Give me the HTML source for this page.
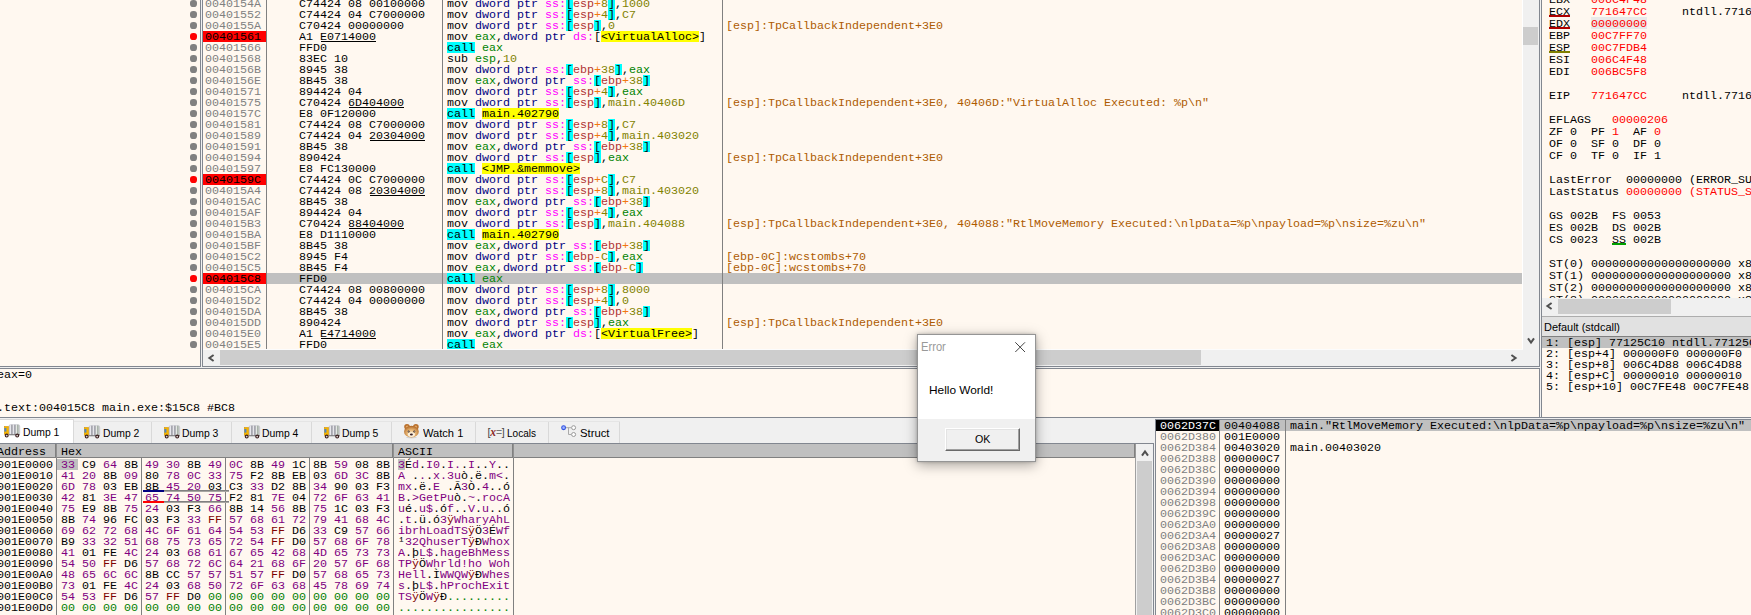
<!DOCTYPE html>
<html><head><meta charset="utf-8"><title>x64dbg</title><style>
html,body{margin:0;padding:0}
body{width:1751px;height:615px;overflow:hidden;position:relative;background:#FFF8F0;font-family:"Liberation Sans",sans-serif}
body div,body svg.a{position:absolute}
.m{font:11px/13px "Liberation Mono",monospace;height:11px;white-space:pre;transform:scaleX(1.06045);transform-origin:0 0}
.s{font-family:"Liberation Sans",sans-serif;white-space:pre;transform-origin:0 0}
.dot{width:6.2px;height:6.2px;border-radius:50%}
#dlg{box-sizing:border-box;border:1px solid #959595;box-shadow:0 3px 12px rgba(0,0,0,.35),0 0 3px rgba(0,0,0,.2)}
#ok{box-sizing:border-box;background:#F0F0F0;border:1px solid;border-color:#fff #696969 #696969 #fff;box-shadow:inset -1px -1px 0 #A0A0A0,inset 1px 1px 0 #E3E3E3}
</style></head>
<body>
<div id="dis" style="left:0;top:0">
<div style="left:267px;top:273px;width:1256px;height:11px;background:#C0C0C0;"></div>
<div class="dot" style="left:190.4px;top:0.4px;background:#808080"></div>
<div class="m" style="left:205px;top:-2px;color:#808080;">0040154A</div>
<div class="m" style="left:298.5px;top:-2px;color:#000;">C74424 08 00100000</div>
<div style="left:566px;top:-2px;width:7px;height:11px;background:#00FFFF;"></div>
<div style="left:608px;top:-2px;width:7px;height:11px;background:#00FFFF;"></div>
<div class="m" style="left:447px;top:-2px;color:#000;"><span style="color:#000;">mov</span> <span style="color:#000080;">dword ptr</span> <span style="color:#FF00FF;">ss:</span><span style="color:#000;">[</span><span style="color:#B03434;">esp</span><span style="color:#F27711;">+</span><span style="color:#828200;">8</span><span style="color:#000;">]</span><span style="color:#000;">,</span><span style="color:#828200;">1000</span></div>
<div class="dot" style="left:190.4px;top:11.4px;background:#808080"></div>
<div class="m" style="left:205px;top:9px;color:#808080;">00401552</div>
<div class="m" style="left:298.5px;top:9px;color:#000;">C74424 04 C7000000</div>
<div style="left:566px;top:9px;width:7px;height:11px;background:#00FFFF;"></div>
<div style="left:608px;top:9px;width:7px;height:11px;background:#00FFFF;"></div>
<div class="m" style="left:447px;top:9px;color:#000;"><span style="color:#000;">mov</span> <span style="color:#000080;">dword ptr</span> <span style="color:#FF00FF;">ss:</span><span style="color:#000;">[</span><span style="color:#B03434;">esp</span><span style="color:#F27711;">+</span><span style="color:#828200;">4</span><span style="color:#000;">]</span><span style="color:#000;">,</span><span style="color:#828200;">C7</span></div>
<div class="dot" style="left:190.4px;top:22.4px;background:#808080"></div>
<div class="m" style="left:205px;top:20px;color:#808080;">0040155A</div>
<div class="m" style="left:298.5px;top:20px;color:#000;">C70424 00000000</div>
<div style="left:566px;top:20px;width:7px;height:11px;background:#00FFFF;"></div>
<div style="left:594px;top:20px;width:7px;height:11px;background:#00FFFF;"></div>
<div class="m" style="left:447px;top:20px;color:#000;"><span style="color:#000;">mov</span> <span style="color:#000080;">dword ptr</span> <span style="color:#FF00FF;">ss:</span><span style="color:#000;">[</span><span style="color:#B03434;">esp</span><span style="color:#000;">]</span><span style="color:#000;">,</span><span style="color:#828200;">0</span></div>
<div class="m" style="left:726.4px;top:20px;color:#AE5B00;">[esp]:TpCallbackIndependent+3E0</div>
<div class="dot" style="left:190.4px;top:33.4px;background:#FF0000"></div>
<div style="left:203px;top:31px;width:63px;height:11px;background:#FF0000;"></div>
<div class="m" style="left:205px;top:31px;color:#000;">00401561</div>
<div style="left:321px;top:41px;width:55px;height:1px;background:#000;"></div>
<div class="m" style="left:298.5px;top:31px;color:#000;">A1 E0714000</div>
<div style="left:601px;top:31px;width:98px;height:11px;background:#FFFF00;"></div>
<div class="m" style="left:447px;top:31px;color:#000;"><span style="color:#000;">mov</span> <span style="color:#008300;">eax</span><span style="color:#000;">,</span><span style="color:#000080;">dword ptr</span> <span style="color:#FF00FF;">ds:</span><span style="color:#000;">[</span><span style="color:#000;">&lt;VirtualAlloc&gt;</span><span style="color:#000;">]</span></div>
<div class="dot" style="left:190.4px;top:44.4px;background:#808080"></div>
<div class="m" style="left:205px;top:42px;color:#808080;">00401566</div>
<div class="m" style="left:298.5px;top:42px;color:#000;">FFD0</div>
<div style="left:447px;top:42px;width:28px;height:11px;background:#00FFFF;"></div>
<div class="m" style="left:447px;top:42px;color:#000;"><span style="color:#000;">call</span> <span style="color:#008300;">eax</span></div>
<div class="dot" style="left:190.4px;top:55.4px;background:#808080"></div>
<div class="m" style="left:205px;top:53px;color:#808080;">00401568</div>
<div class="m" style="left:298.5px;top:53px;color:#000;">83EC 10</div>
<div class="m" style="left:447px;top:53px;color:#000;"><span style="color:#000;">sub</span> <span style="color:#008300;">esp</span><span style="color:#000;">,</span><span style="color:#828200;">10</span></div>
<div class="dot" style="left:190.4px;top:66.4px;background:#808080"></div>
<div class="m" style="left:205px;top:64px;color:#808080;">0040156B</div>
<div class="m" style="left:298.5px;top:64px;color:#000;">8945 38</div>
<div style="left:566px;top:64px;width:7px;height:11px;background:#00FFFF;"></div>
<div style="left:615px;top:64px;width:7px;height:11px;background:#00FFFF;"></div>
<div class="m" style="left:447px;top:64px;color:#000;"><span style="color:#000;">mov</span> <span style="color:#000080;">dword ptr</span> <span style="color:#FF00FF;">ss:</span><span style="color:#000;">[</span><span style="color:#B03434;">ebp</span><span style="color:#F27711;">+</span><span style="color:#828200;">38</span><span style="color:#000;">]</span><span style="color:#000;">,</span><span style="color:#008300;">eax</span></div>
<div class="dot" style="left:190.4px;top:77.4px;background:#808080"></div>
<div class="m" style="left:205px;top:75px;color:#808080;">0040156E</div>
<div class="m" style="left:298.5px;top:75px;color:#000;">8B45 38</div>
<div style="left:594px;top:75px;width:7px;height:11px;background:#00FFFF;"></div>
<div style="left:643px;top:75px;width:7px;height:11px;background:#00FFFF;"></div>
<div class="m" style="left:447px;top:75px;color:#000;"><span style="color:#000;">mov</span> <span style="color:#008300;">eax</span><span style="color:#000;">,</span><span style="color:#000080;">dword ptr</span> <span style="color:#FF00FF;">ss:</span><span style="color:#000;">[</span><span style="color:#B03434;">ebp</span><span style="color:#F27711;">+</span><span style="color:#828200;">38</span><span style="color:#000;">]</span></div>
<div class="dot" style="left:190.4px;top:88.4px;background:#808080"></div>
<div class="m" style="left:205px;top:86px;color:#808080;">00401571</div>
<div class="m" style="left:298.5px;top:86px;color:#000;">894424 04</div>
<div style="left:566px;top:86px;width:7px;height:11px;background:#00FFFF;"></div>
<div style="left:608px;top:86px;width:7px;height:11px;background:#00FFFF;"></div>
<div class="m" style="left:447px;top:86px;color:#000;"><span style="color:#000;">mov</span> <span style="color:#000080;">dword ptr</span> <span style="color:#FF00FF;">ss:</span><span style="color:#000;">[</span><span style="color:#B03434;">esp</span><span style="color:#F27711;">+</span><span style="color:#828200;">4</span><span style="color:#000;">]</span><span style="color:#000;">,</span><span style="color:#008300;">eax</span></div>
<div class="dot" style="left:190.4px;top:99.4px;background:#808080"></div>
<div class="m" style="left:205px;top:97px;color:#808080;">00401575</div>
<div style="left:349px;top:107px;width:55px;height:1px;background:#000;"></div>
<div class="m" style="left:298.5px;top:97px;color:#000;">C70424 6D404000</div>
<div style="left:566px;top:97px;width:7px;height:11px;background:#00FFFF;"></div>
<div style="left:594px;top:97px;width:7px;height:11px;background:#00FFFF;"></div>
<div class="m" style="left:447px;top:97px;color:#000;"><span style="color:#000;">mov</span> <span style="color:#000080;">dword ptr</span> <span style="color:#FF00FF;">ss:</span><span style="color:#000;">[</span><span style="color:#B03434;">esp</span><span style="color:#000;">]</span><span style="color:#000;">,</span><span style="color:#828200;">main.40406D</span></div>
<div class="m" style="left:726.4px;top:97px;color:#AE5B00;">[esp]:TpCallbackIndependent+3E0, 40406D:"VirtualAlloc Executed: %p\n"</div>
<div class="dot" style="left:190.4px;top:110.4px;background:#808080"></div>
<div class="m" style="left:205px;top:108px;color:#808080;">0040157C</div>
<div class="m" style="left:298.5px;top:108px;color:#000;">E8 0F120000</div>
<div style="left:447px;top:108px;width:28px;height:11px;background:#00FFFF;"></div>
<div style="left:482px;top:108px;width:77px;height:11px;background:#FFFF00;"></div>
<div class="m" style="left:447px;top:108px;color:#000;"><span style="color:#000;">call</span> <span style="color:#000;">main.402790</span></div>
<div class="dot" style="left:190.4px;top:121.4px;background:#808080"></div>
<div class="m" style="left:205px;top:119px;color:#808080;">00401581</div>
<div class="m" style="left:298.5px;top:119px;color:#000;">C74424 08 C7000000</div>
<div style="left:566px;top:119px;width:7px;height:11px;background:#00FFFF;"></div>
<div style="left:608px;top:119px;width:7px;height:11px;background:#00FFFF;"></div>
<div class="m" style="left:447px;top:119px;color:#000;"><span style="color:#000;">mov</span> <span style="color:#000080;">dword ptr</span> <span style="color:#FF00FF;">ss:</span><span style="color:#000;">[</span><span style="color:#B03434;">esp</span><span style="color:#F27711;">+</span><span style="color:#828200;">8</span><span style="color:#000;">]</span><span style="color:#000;">,</span><span style="color:#828200;">C7</span></div>
<div class="dot" style="left:190.4px;top:132.4px;background:#808080"></div>
<div class="m" style="left:205px;top:130px;color:#808080;">00401589</div>
<div style="left:370px;top:140px;width:55px;height:1px;background:#000;"></div>
<div class="m" style="left:298.5px;top:130px;color:#000;">C74424 04 20304000</div>
<div style="left:566px;top:130px;width:7px;height:11px;background:#00FFFF;"></div>
<div style="left:608px;top:130px;width:7px;height:11px;background:#00FFFF;"></div>
<div class="m" style="left:447px;top:130px;color:#000;"><span style="color:#000;">mov</span> <span style="color:#000080;">dword ptr</span> <span style="color:#FF00FF;">ss:</span><span style="color:#000;">[</span><span style="color:#B03434;">esp</span><span style="color:#F27711;">+</span><span style="color:#828200;">4</span><span style="color:#000;">]</span><span style="color:#000;">,</span><span style="color:#828200;">main.403020</span></div>
<div class="dot" style="left:190.4px;top:143.4px;background:#808080"></div>
<div class="m" style="left:205px;top:141px;color:#808080;">00401591</div>
<div class="m" style="left:298.5px;top:141px;color:#000;">8B45 38</div>
<div style="left:594px;top:141px;width:7px;height:11px;background:#00FFFF;"></div>
<div style="left:643px;top:141px;width:7px;height:11px;background:#00FFFF;"></div>
<div class="m" style="left:447px;top:141px;color:#000;"><span style="color:#000;">mov</span> <span style="color:#008300;">eax</span><span style="color:#000;">,</span><span style="color:#000080;">dword ptr</span> <span style="color:#FF00FF;">ss:</span><span style="color:#000;">[</span><span style="color:#B03434;">ebp</span><span style="color:#F27711;">+</span><span style="color:#828200;">38</span><span style="color:#000;">]</span></div>
<div class="dot" style="left:190.4px;top:154.4px;background:#808080"></div>
<div class="m" style="left:205px;top:152px;color:#808080;">00401594</div>
<div class="m" style="left:298.5px;top:152px;color:#000;">890424</div>
<div style="left:566px;top:152px;width:7px;height:11px;background:#00FFFF;"></div>
<div style="left:594px;top:152px;width:7px;height:11px;background:#00FFFF;"></div>
<div class="m" style="left:447px;top:152px;color:#000;"><span style="color:#000;">mov</span> <span style="color:#000080;">dword ptr</span> <span style="color:#FF00FF;">ss:</span><span style="color:#000;">[</span><span style="color:#B03434;">esp</span><span style="color:#000;">]</span><span style="color:#000;">,</span><span style="color:#008300;">eax</span></div>
<div class="m" style="left:726.4px;top:152px;color:#AE5B00;">[esp]:TpCallbackIndependent+3E0</div>
<div class="dot" style="left:190.4px;top:165.4px;background:#808080"></div>
<div class="m" style="left:205px;top:163px;color:#808080;">00401597</div>
<div class="m" style="left:298.5px;top:163px;color:#000;">E8 FC130000</div>
<div style="left:447px;top:163px;width:28px;height:11px;background:#00FFFF;"></div>
<div style="left:482px;top:163px;width:98px;height:11px;background:#FFFF00;"></div>
<div class="m" style="left:447px;top:163px;color:#000;"><span style="color:#000;">call</span> <span style="color:#000;">&lt;JMP.&amp;memmove&gt;</span></div>
<div class="dot" style="left:190.4px;top:176.4px;background:#FF0000"></div>
<div style="left:203px;top:174px;width:63px;height:11px;background:#FF0000;"></div>
<div class="m" style="left:205px;top:174px;color:#000;">0040159C</div>
<div class="m" style="left:298.5px;top:174px;color:#000;">C74424 0C C7000000</div>
<div style="left:566px;top:174px;width:7px;height:11px;background:#00FFFF;"></div>
<div style="left:608px;top:174px;width:7px;height:11px;background:#00FFFF;"></div>
<div class="m" style="left:447px;top:174px;color:#000;"><span style="color:#000;">mov</span> <span style="color:#000080;">dword ptr</span> <span style="color:#FF00FF;">ss:</span><span style="color:#000;">[</span><span style="color:#B03434;">esp</span><span style="color:#F27711;">+</span><span style="color:#828200;">C</span><span style="color:#000;">]</span><span style="color:#000;">,</span><span style="color:#828200;">C7</span></div>
<div class="dot" style="left:190.4px;top:187.4px;background:#808080"></div>
<div class="m" style="left:205px;top:185px;color:#808080;">004015A4</div>
<div style="left:370px;top:195px;width:55px;height:1px;background:#000;"></div>
<div class="m" style="left:298.5px;top:185px;color:#000;">C74424 08 20304000</div>
<div style="left:566px;top:185px;width:7px;height:11px;background:#00FFFF;"></div>
<div style="left:608px;top:185px;width:7px;height:11px;background:#00FFFF;"></div>
<div class="m" style="left:447px;top:185px;color:#000;"><span style="color:#000;">mov</span> <span style="color:#000080;">dword ptr</span> <span style="color:#FF00FF;">ss:</span><span style="color:#000;">[</span><span style="color:#B03434;">esp</span><span style="color:#F27711;">+</span><span style="color:#828200;">8</span><span style="color:#000;">]</span><span style="color:#000;">,</span><span style="color:#828200;">main.403020</span></div>
<div class="dot" style="left:190.4px;top:198.4px;background:#808080"></div>
<div class="m" style="left:205px;top:196px;color:#808080;">004015AC</div>
<div class="m" style="left:298.5px;top:196px;color:#000;">8B45 38</div>
<div style="left:594px;top:196px;width:7px;height:11px;background:#00FFFF;"></div>
<div style="left:643px;top:196px;width:7px;height:11px;background:#00FFFF;"></div>
<div class="m" style="left:447px;top:196px;color:#000;"><span style="color:#000;">mov</span> <span style="color:#008300;">eax</span><span style="color:#000;">,</span><span style="color:#000080;">dword ptr</span> <span style="color:#FF00FF;">ss:</span><span style="color:#000;">[</span><span style="color:#B03434;">ebp</span><span style="color:#F27711;">+</span><span style="color:#828200;">38</span><span style="color:#000;">]</span></div>
<div class="dot" style="left:190.4px;top:209.4px;background:#808080"></div>
<div class="m" style="left:205px;top:207px;color:#808080;">004015AF</div>
<div class="m" style="left:298.5px;top:207px;color:#000;">894424 04</div>
<div style="left:566px;top:207px;width:7px;height:11px;background:#00FFFF;"></div>
<div style="left:608px;top:207px;width:7px;height:11px;background:#00FFFF;"></div>
<div class="m" style="left:447px;top:207px;color:#000;"><span style="color:#000;">mov</span> <span style="color:#000080;">dword ptr</span> <span style="color:#FF00FF;">ss:</span><span style="color:#000;">[</span><span style="color:#B03434;">esp</span><span style="color:#F27711;">+</span><span style="color:#828200;">4</span><span style="color:#000;">]</span><span style="color:#000;">,</span><span style="color:#008300;">eax</span></div>
<div class="dot" style="left:190.4px;top:220.4px;background:#808080"></div>
<div class="m" style="left:205px;top:218px;color:#808080;">004015B3</div>
<div style="left:349px;top:228px;width:55px;height:1px;background:#000;"></div>
<div class="m" style="left:298.5px;top:218px;color:#000;">C70424 88404000</div>
<div style="left:566px;top:218px;width:7px;height:11px;background:#00FFFF;"></div>
<div style="left:594px;top:218px;width:7px;height:11px;background:#00FFFF;"></div>
<div class="m" style="left:447px;top:218px;color:#000;"><span style="color:#000;">mov</span> <span style="color:#000080;">dword ptr</span> <span style="color:#FF00FF;">ss:</span><span style="color:#000;">[</span><span style="color:#B03434;">esp</span><span style="color:#000;">]</span><span style="color:#000;">,</span><span style="color:#828200;">main.404088</span></div>
<div class="m" style="left:726.4px;top:218px;color:#AE5B00;">[esp]:TpCallbackIndependent+3E0, 404088:"RtlMoveMemory Executed:\nlpData=%p\npayload=%p\nsize=%zu\n"</div>
<div class="dot" style="left:190.4px;top:231.4px;background:#808080"></div>
<div class="m" style="left:205px;top:229px;color:#808080;">004015BA</div>
<div class="m" style="left:298.5px;top:229px;color:#000;">E8 D1110000</div>
<div style="left:447px;top:229px;width:28px;height:11px;background:#00FFFF;"></div>
<div style="left:482px;top:229px;width:77px;height:11px;background:#FFFF00;"></div>
<div class="m" style="left:447px;top:229px;color:#000;"><span style="color:#000;">call</span> <span style="color:#000;">main.402790</span></div>
<div class="dot" style="left:190.4px;top:242.4px;background:#808080"></div>
<div class="m" style="left:205px;top:240px;color:#808080;">004015BF</div>
<div class="m" style="left:298.5px;top:240px;color:#000;">8B45 38</div>
<div style="left:594px;top:240px;width:7px;height:11px;background:#00FFFF;"></div>
<div style="left:643px;top:240px;width:7px;height:11px;background:#00FFFF;"></div>
<div class="m" style="left:447px;top:240px;color:#000;"><span style="color:#000;">mov</span> <span style="color:#008300;">eax</span><span style="color:#000;">,</span><span style="color:#000080;">dword ptr</span> <span style="color:#FF00FF;">ss:</span><span style="color:#000;">[</span><span style="color:#B03434;">ebp</span><span style="color:#F27711;">+</span><span style="color:#828200;">38</span><span style="color:#000;">]</span></div>
<div class="dot" style="left:190.4px;top:253.4px;background:#808080"></div>
<div class="m" style="left:205px;top:251px;color:#808080;">004015C2</div>
<div class="m" style="left:298.5px;top:251px;color:#000;">8945 F4</div>
<div style="left:566px;top:251px;width:7px;height:11px;background:#00FFFF;"></div>
<div style="left:608px;top:251px;width:7px;height:11px;background:#00FFFF;"></div>
<div class="m" style="left:447px;top:251px;color:#000;"><span style="color:#000;">mov</span> <span style="color:#000080;">dword ptr</span> <span style="color:#FF00FF;">ss:</span><span style="color:#000;">[</span><span style="color:#B03434;">ebp</span><span style="color:#F27711;">-</span><span style="color:#828200;">C</span><span style="color:#000;">]</span><span style="color:#000;">,</span><span style="color:#008300;">eax</span></div>
<div class="m" style="left:726.4px;top:251px;color:#AE5B00;">[ebp-0C]:wcstombs+70</div>
<div class="dot" style="left:190.4px;top:264.4px;background:#808080"></div>
<div class="m" style="left:205px;top:262px;color:#808080;">004015C5</div>
<div class="m" style="left:298.5px;top:262px;color:#000;">8B45 F4</div>
<div style="left:594px;top:262px;width:7px;height:11px;background:#00FFFF;"></div>
<div style="left:636px;top:262px;width:7px;height:11px;background:#00FFFF;"></div>
<div class="m" style="left:447px;top:262px;color:#000;"><span style="color:#000;">mov</span> <span style="color:#008300;">eax</span><span style="color:#000;">,</span><span style="color:#000080;">dword ptr</span> <span style="color:#FF00FF;">ss:</span><span style="color:#000;">[</span><span style="color:#B03434;">ebp</span><span style="color:#F27711;">-</span><span style="color:#828200;">C</span><span style="color:#000;">]</span></div>
<div class="m" style="left:726.4px;top:262px;color:#AE5B00;">[ebp-0C]:wcstombs+70</div>
<div class="dot" style="left:190.4px;top:275.4px;background:#FF0000"></div>
<div style="left:203px;top:273px;width:63px;height:11px;background:#FF0000;"></div>
<div class="m" style="left:205px;top:273px;color:#000;">004015C8</div>
<div class="m" style="left:298.5px;top:273px;color:#000;">FFD0</div>
<div style="left:447px;top:273px;width:28px;height:11px;background:#00FFFF;"></div>
<div class="m" style="left:447px;top:273px;color:#000;"><span style="color:#000;">call</span> <span style="color:#008300;">eax</span></div>
<div class="dot" style="left:190.4px;top:286.4px;background:#808080"></div>
<div class="m" style="left:205px;top:284px;color:#808080;">004015CA</div>
<div class="m" style="left:298.5px;top:284px;color:#000;">C74424 08 00800000</div>
<div style="left:566px;top:284px;width:7px;height:11px;background:#00FFFF;"></div>
<div style="left:608px;top:284px;width:7px;height:11px;background:#00FFFF;"></div>
<div class="m" style="left:447px;top:284px;color:#000;"><span style="color:#000;">mov</span> <span style="color:#000080;">dword ptr</span> <span style="color:#FF00FF;">ss:</span><span style="color:#000;">[</span><span style="color:#B03434;">esp</span><span style="color:#F27711;">+</span><span style="color:#828200;">8</span><span style="color:#000;">]</span><span style="color:#000;">,</span><span style="color:#828200;">8000</span></div>
<div class="dot" style="left:190.4px;top:297.4px;background:#808080"></div>
<div class="m" style="left:205px;top:295px;color:#808080;">004015D2</div>
<div class="m" style="left:298.5px;top:295px;color:#000;">C74424 04 00000000</div>
<div style="left:566px;top:295px;width:7px;height:11px;background:#00FFFF;"></div>
<div style="left:608px;top:295px;width:7px;height:11px;background:#00FFFF;"></div>
<div class="m" style="left:447px;top:295px;color:#000;"><span style="color:#000;">mov</span> <span style="color:#000080;">dword ptr</span> <span style="color:#FF00FF;">ss:</span><span style="color:#000;">[</span><span style="color:#B03434;">esp</span><span style="color:#F27711;">+</span><span style="color:#828200;">4</span><span style="color:#000;">]</span><span style="color:#000;">,</span><span style="color:#828200;">0</span></div>
<div class="dot" style="left:190.4px;top:308.4px;background:#808080"></div>
<div class="m" style="left:205px;top:306px;color:#808080;">004015DA</div>
<div class="m" style="left:298.5px;top:306px;color:#000;">8B45 38</div>
<div style="left:594px;top:306px;width:7px;height:11px;background:#00FFFF;"></div>
<div style="left:643px;top:306px;width:7px;height:11px;background:#00FFFF;"></div>
<div class="m" style="left:447px;top:306px;color:#000;"><span style="color:#000;">mov</span> <span style="color:#008300;">eax</span><span style="color:#000;">,</span><span style="color:#000080;">dword ptr</span> <span style="color:#FF00FF;">ss:</span><span style="color:#000;">[</span><span style="color:#B03434;">ebp</span><span style="color:#F27711;">+</span><span style="color:#828200;">38</span><span style="color:#000;">]</span></div>
<div class="dot" style="left:190.4px;top:319.4px;background:#808080"></div>
<div class="m" style="left:205px;top:317px;color:#808080;">004015DD</div>
<div class="m" style="left:298.5px;top:317px;color:#000;">890424</div>
<div style="left:566px;top:317px;width:7px;height:11px;background:#00FFFF;"></div>
<div style="left:594px;top:317px;width:7px;height:11px;background:#00FFFF;"></div>
<div class="m" style="left:447px;top:317px;color:#000;"><span style="color:#000;">mov</span> <span style="color:#000080;">dword ptr</span> <span style="color:#FF00FF;">ss:</span><span style="color:#000;">[</span><span style="color:#B03434;">esp</span><span style="color:#000;">]</span><span style="color:#000;">,</span><span style="color:#008300;">eax</span></div>
<div class="m" style="left:726.4px;top:317px;color:#AE5B00;">[esp]:TpCallbackIndependent+3E0</div>
<div class="dot" style="left:190.4px;top:330.4px;background:#808080"></div>
<div class="m" style="left:205px;top:328px;color:#808080;">004015E0</div>
<div style="left:321px;top:338px;width:55px;height:1px;background:#000;"></div>
<div class="m" style="left:298.5px;top:328px;color:#000;">A1 E4714000</div>
<div style="left:601px;top:328px;width:91px;height:11px;background:#FFFF00;"></div>
<div class="m" style="left:447px;top:328px;color:#000;"><span style="color:#000;">mov</span> <span style="color:#008300;">eax</span><span style="color:#000;">,</span><span style="color:#000080;">dword ptr</span> <span style="color:#FF00FF;">ds:</span><span style="color:#000;">[</span><span style="color:#000;">&lt;VirtualFree&gt;</span><span style="color:#000;">]</span></div>
<div class="dot" style="left:190.4px;top:341.4px;background:#808080"></div>
<div class="m" style="left:205px;top:339px;color:#808080;">004015E5</div>
<div class="m" style="left:298.5px;top:339px;color:#000;">FFD0</div>
<div style="left:447px;top:339px;width:28px;height:11px;background:#00FFFF;"></div>
<div class="m" style="left:447px;top:339px;color:#000;"><span style="color:#000;">call</span> <span style="color:#008300;">eax</span></div>
</div>
<div style="left:266px;top:0px;width:1px;height:349px;background:#808080;"></div>
<div style="left:442px;top:0px;width:1px;height:349px;background:#808080;"></div>
<div style="left:722px;top:0px;width:1px;height:349px;background:#808080;"></div>
<div style="left:200px;top:0px;width:1px;height:367px;background:#828790;"></div>
<div style="left:202px;top:0px;width:1px;height:367px;background:#828790;"></div>
<div style="left:201px;top:0px;width:1px;height:369px;background:#F0F0F0;"></div>
<div style="left:203px;top:349px;width:1336px;height:17px;background:#F0F0F0;"></div>
<div style="left:203px;top:349px;width:1320px;height:1px;background:#FCFCFC;"></div>
<div style="left:220px;top:350px;width:981px;height:15px;background:#CDCDCD;"></div>
<svg class="a" style="left:205.3px;top:351.5px" width="12" height="12" viewBox="-6 -6 12 12"><path d="M2.6 -3.0 L-1.6 0 L2.6 3.0" fill="none" stroke="#505050" stroke-width="2"/></svg>
<svg class="a" style="left:1508.0px;top:351.5px" width="12" height="12" viewBox="-6 -6 12 12"><path d="M-2.6 -3.0 L1.6 0 L-2.6 3.0" fill="none" stroke="#505050" stroke-width="2"/></svg>
<div style="left:1522px;top:0px;width:1px;height:349px;background:#FFFFFF;"></div>
<div style="left:1523px;top:0px;width:16px;height:349px;background:#F0F0F0;"></div>
<div style="left:1523px;top:27px;width:15px;height:18px;background:#CDCDCD;"></div>
<svg class="a" style="left:1524.5px;top:335px" width="12" height="12" viewBox="-6 -6 12 12"><path d="M-3.0 -2.6 L0 1.6 L3.0 -2.6" fill="none" stroke="#505050" stroke-width="2"/></svg>
<div style="left:1539px;top:0px;width:1px;height:367px;background:#828790;"></div>
<div style="left:1540px;top:0px;width:1px;height:418px;background:#F0F0F0;"></div>
<div style="left:1541px;top:0px;width:1px;height:418px;background:#828790;"></div>
<div style="left:1539px;top:368px;width:1px;height:50px;background:#828790;"></div>
<div style="left:0px;top:366px;width:200px;height:1px;background:#828790;"></div>
<div style="left:202px;top:366px;width:1338px;height:1px;background:#828790;"></div>
<div style="left:0px;top:367px;width:1540px;height:1px;background:#F0F0F0;"></div>
<div style="left:0px;top:368px;width:1540px;height:1px;background:#828790;"></div>
<div style="left:0px;top:417px;width:1751px;height:1px;background:#828790;"></div>
<div class="m" style="left:-3px;top:369px;color:#000;">eax=0</div>
<div class="m" style="left:-3px;top:402px;color:#000;">.text:004015C8 main.exe:$15C8 #BC8</div>
<div id="regs" style="left:0;top:0">
<div class="m" style="left:1549px;top:-6px;color:#000;">EBX   <span style="color:#FF0000;">006C4F48</span></div>
<div style="left:1549px;top:15px;width:21px;height:2px;background:#B00000;"></div>
<div class="m" style="left:1549px;top:6px;color:#000;">ECX   <span style="color:#FF0000;">771647CC</span>     ntdll.771647CC</div>
<div style="left:1591px;top:17px;width:56px;height:12px;background:#E9E9E9;"></div>
<div style="left:1549px;top:27px;width:21px;height:2px;background:#B00000;"></div>
<div class="m" style="left:1549px;top:18px;color:#000;">EDX   <span style="color:#FF0000;">00000000</span></div>
<div class="m" style="left:1549px;top:30px;color:#000;">EBP   <span style="color:#FF0000;">00C7FF70</span></div>
<div style="left:1549px;top:51px;width:21px;height:2px;background:#808000;"></div>
<div class="m" style="left:1549px;top:42px;color:#000;">ESP   <span style="color:#FF0000;">00C7FDB4</span></div>
<div class="m" style="left:1549px;top:54px;color:#000;">ESI   <span style="color:#FF0000;">006C4F48</span></div>
<div class="m" style="left:1549px;top:66px;color:#000;">EDI   <span style="color:#FF0000;">006BC5F8</span></div>
<div class="m" style="left:1549px;top:90px;color:#000;">EIP   <span style="color:#FF0000;">771647CC</span>     ntdll.771647CC</div>
<div class="m" style="left:1549px;top:114px;color:#000;">EFLAGS   <span style="color:#FF0000;">00000206</span></div>
<div class="m" style="left:1549px;top:126px;color:#000;">ZF 0  PF <span style="color:#FF0000;">1</span>  AF <span style="color:#FF0000;">0</span></div>
<div class="m" style="left:1549px;top:138px;color:#000;">OF 0  SF 0  DF 0</div>
<div class="m" style="left:1549px;top:150px;color:#000;">CF 0  TF 0  IF 1</div>
<div class="m" style="left:1549px;top:174px;color:#000;">LastError  00000000 (ERROR_SUCCESS)</div>
<div class="m" style="left:1549px;top:186px;color:#000;">LastStatus <span style="color:#FF0000;">00000000 (STATUS_SUCCESS)</span></div>
<div class="m" style="left:1549px;top:210px;color:#000;">GS 002B  FS 0053</div>
<div class="m" style="left:1549px;top:222px;color:#000;">ES 002B  DS 002B</div>
<div style="left:1612px;top:243px;width:14px;height:2px;background:#00A000;"></div>
<div class="m" style="left:1549px;top:234px;color:#000;">CS 0023  SS 002B</div>
<div class="m" style="left:1549px;top:258px;color:#000;">ST(0) 00000000000000000000 x87r0 Empty 0.000000000000000000</div>
<div class="m" style="left:1549px;top:270px;color:#000;">ST(1) 00000000000000000000 x87r1 Empty 0.000000000000000000</div>
<div class="m" style="left:1549px;top:282px;color:#000;">ST(2) 00000000000000000000 x87r2 Empty 0.000000000000000000</div>
<div class="m" style="left:1549px;top:294px;color:#000;">ST(3) 00000000000000000000 x87r3 Empty 0.000000000000000000</div>
</div>
<div style="left:1542px;top:298px;width:209px;height:18px;background:#F0F0F0;"></div>
<div style="left:1558px;top:299px;width:113px;height:15px;background:#CDCDCD;"></div>
<svg class="a" style="left:1543.2px;top:300.3px" width="12" height="12" viewBox="-6 -6 12 12"><path d="M2.6 -3.0 L-1.6 0 L2.6 3.0" fill="none" stroke="#505050" stroke-width="2"/></svg>
<div style="left:1542px;top:316px;width:209px;height:1px;background:#ADADAD;"></div>
<div style="left:1542px;top:317px;width:209px;height:19px;background:#E1E1E1;"></div>
<div style="left:1542px;top:336px;width:209px;height:1px;background:#808080;"></div>
<div class="s" style="left:1544.3px;top:319px;font-size:11.5px;line-height:16px;color:#000;transform:scaleX(0.9513);">Default (stdcall)</div>
<div style="left:1542px;top:337px;width:209px;height:11px;background:#C0C0C0;"></div>
<div class="m" style="left:1546px;top:337px;color:#000;">1: [esp] 77125C10 ntdll.77125C10</div>
<div class="m" style="left:1546px;top:348px;color:#000;">2: [esp+4] 000000F0 000000F0</div>
<div class="m" style="left:1546px;top:359px;color:#000;">3: [esp+8] 006C4D88 006C4D88</div>
<div class="m" style="left:1546px;top:370px;color:#000;">4: [esp+C] 00000010 00000010</div>
<div class="m" style="left:1546px;top:381px;color:#000;">5: [esp+10] 00C7FE48 00C7FE48</div>
<div style="left:0px;top:418px;width:1155px;height:26px;background:#F0F0F0;"></div>
<div style="left:1154px;top:418px;width:1px;height:197px;background:#F0F0F0;"></div>
<div style="left:0px;top:419px;width:74px;height:25px;background:#FFFFFF;border-top:1px solid #D9D9D9;border-right:1px solid #D9D9D9;box-sizing:border-box;"></div>
<div style="left:151px;top:421px;width:1px;height:22px;background:#D9D9D9;"></div>
<div style="left:231px;top:421px;width:1px;height:22px;background:#D9D9D9;"></div>
<div style="left:311px;top:421px;width:1px;height:22px;background:#D9D9D9;"></div>
<div style="left:391px;top:421px;width:1px;height:22px;background:#D9D9D9;"></div>
<div style="left:475px;top:421px;width:1px;height:22px;background:#D9D9D9;"></div>
<div style="left:548px;top:421px;width:1px;height:22px;background:#D9D9D9;"></div>
<div style="left:619px;top:421px;width:1px;height:22px;background:#D9D9D9;"></div>
<div style="left:74px;top:421px;width:546px;height:1px;background:#E5E5E5;"></div>
<svg class="a" style="left:4px;top:423.5px" width="18" height="15" viewBox="0 0 18 15">
<defs><linearGradient id="tg0" x1="0" x2="1" y1="0" y2="0"><stop offset="0" stop-color="#b4b4bc"/><stop offset=".12" stop-color="#f6f6fa"/><stop offset=".27" stop-color="#8c8c96"/><stop offset=".4" stop-color="#f2f2f6"/><stop offset=".55" stop-color="#8c8c96"/><stop offset=".68" stop-color="#eef2ee"/><stop offset=".83" stop-color="#8e9890"/><stop offset=".93" stop-color="#e8eee8"/><stop offset="1" stop-color="#b0b0b8"/></linearGradient></defs>
<rect x="5" y="0.6" width="10.8" height="10.2" rx="1.6" fill="url(#tg0)" stroke="#c4c4cc" stroke-width=".5"/>
<rect x="4.6" y="10.3" width="11.4" height="0.9" fill="#6a6a6a"/>
<rect x="0.2" y="2.4" width="4.4" height="8" fill="#F5B400" stroke="#cf9000" stroke-width=".5"/>
<rect x="0.4" y="4" width="2" height="3.6" fill="#4f86c6"/>
<circle cx="2.7" cy="11.6" r="1.45" fill="#d8cfcf" stroke="#3a1c1c" stroke-width="1.1"/>
<circle cx="13.2" cy="11.6" r="1.45" fill="#d8cfcf" stroke="#3a1c1c" stroke-width="1.1"/>
</svg>
<div class="s" style="left:22.9px;top:424px;font-size:11.5px;line-height:16px;color:#000;transform:scaleX(0.9039);">Dump 1</div>
<svg class="a" style="left:84px;top:424.5px" width="18" height="15" viewBox="0 0 18 15">
<defs><linearGradient id="tg1" x1="0" x2="1" y1="0" y2="0"><stop offset="0" stop-color="#b4b4bc"/><stop offset=".12" stop-color="#f6f6fa"/><stop offset=".27" stop-color="#8c8c96"/><stop offset=".4" stop-color="#f2f2f6"/><stop offset=".55" stop-color="#8c8c96"/><stop offset=".68" stop-color="#eef2ee"/><stop offset=".83" stop-color="#8e9890"/><stop offset=".93" stop-color="#e8eee8"/><stop offset="1" stop-color="#b0b0b8"/></linearGradient></defs>
<rect x="5" y="0.6" width="10.8" height="10.2" rx="1.6" fill="url(#tg1)" stroke="#c4c4cc" stroke-width=".5"/>
<rect x="4.6" y="10.3" width="11.4" height="0.9" fill="#6a6a6a"/>
<rect x="0.2" y="2.4" width="4.4" height="8" fill="#F5B400" stroke="#cf9000" stroke-width=".5"/>
<rect x="0.4" y="4" width="2" height="3.6" fill="#4f86c6"/>
<circle cx="2.7" cy="11.6" r="1.45" fill="#d8cfcf" stroke="#3a1c1c" stroke-width="1.1"/>
<circle cx="13.2" cy="11.6" r="1.45" fill="#d8cfcf" stroke="#3a1c1c" stroke-width="1.1"/>
</svg>
<div class="s" style="left:102.9px;top:425px;font-size:11.5px;line-height:16px;color:#000;transform:scaleX(0.9039);">Dump 2</div>
<svg class="a" style="left:163.5px;top:424.5px" width="18" height="15" viewBox="0 0 18 15">
<defs><linearGradient id="tg2" x1="0" x2="1" y1="0" y2="0"><stop offset="0" stop-color="#b4b4bc"/><stop offset=".12" stop-color="#f6f6fa"/><stop offset=".27" stop-color="#8c8c96"/><stop offset=".4" stop-color="#f2f2f6"/><stop offset=".55" stop-color="#8c8c96"/><stop offset=".68" stop-color="#eef2ee"/><stop offset=".83" stop-color="#8e9890"/><stop offset=".93" stop-color="#e8eee8"/><stop offset="1" stop-color="#b0b0b8"/></linearGradient></defs>
<rect x="5" y="0.6" width="10.8" height="10.2" rx="1.6" fill="url(#tg2)" stroke="#c4c4cc" stroke-width=".5"/>
<rect x="4.6" y="10.3" width="11.4" height="0.9" fill="#6a6a6a"/>
<rect x="0.2" y="2.4" width="4.4" height="8" fill="#F5B400" stroke="#cf9000" stroke-width=".5"/>
<rect x="0.4" y="4" width="2" height="3.6" fill="#4f86c6"/>
<circle cx="2.7" cy="11.6" r="1.45" fill="#d8cfcf" stroke="#3a1c1c" stroke-width="1.1"/>
<circle cx="13.2" cy="11.6" r="1.45" fill="#d8cfcf" stroke="#3a1c1c" stroke-width="1.1"/>
</svg>
<div class="s" style="left:182.4px;top:425px;font-size:11.5px;line-height:16px;color:#000;transform:scaleX(0.9039);">Dump 3</div>
<svg class="a" style="left:243.5px;top:424.5px" width="18" height="15" viewBox="0 0 18 15">
<defs><linearGradient id="tg3" x1="0" x2="1" y1="0" y2="0"><stop offset="0" stop-color="#b4b4bc"/><stop offset=".12" stop-color="#f6f6fa"/><stop offset=".27" stop-color="#8c8c96"/><stop offset=".4" stop-color="#f2f2f6"/><stop offset=".55" stop-color="#8c8c96"/><stop offset=".68" stop-color="#eef2ee"/><stop offset=".83" stop-color="#8e9890"/><stop offset=".93" stop-color="#e8eee8"/><stop offset="1" stop-color="#b0b0b8"/></linearGradient></defs>
<rect x="5" y="0.6" width="10.8" height="10.2" rx="1.6" fill="url(#tg3)" stroke="#c4c4cc" stroke-width=".5"/>
<rect x="4.6" y="10.3" width="11.4" height="0.9" fill="#6a6a6a"/>
<rect x="0.2" y="2.4" width="4.4" height="8" fill="#F5B400" stroke="#cf9000" stroke-width=".5"/>
<rect x="0.4" y="4" width="2" height="3.6" fill="#4f86c6"/>
<circle cx="2.7" cy="11.6" r="1.45" fill="#d8cfcf" stroke="#3a1c1c" stroke-width="1.1"/>
<circle cx="13.2" cy="11.6" r="1.45" fill="#d8cfcf" stroke="#3a1c1c" stroke-width="1.1"/>
</svg>
<div class="s" style="left:262.4px;top:425px;font-size:11.5px;line-height:16px;color:#000;transform:scaleX(0.9039);">Dump 4</div>
<svg class="a" style="left:323.5px;top:424.5px" width="18" height="15" viewBox="0 0 18 15">
<defs><linearGradient id="tg4" x1="0" x2="1" y1="0" y2="0"><stop offset="0" stop-color="#b4b4bc"/><stop offset=".12" stop-color="#f6f6fa"/><stop offset=".27" stop-color="#8c8c96"/><stop offset=".4" stop-color="#f2f2f6"/><stop offset=".55" stop-color="#8c8c96"/><stop offset=".68" stop-color="#eef2ee"/><stop offset=".83" stop-color="#8e9890"/><stop offset=".93" stop-color="#e8eee8"/><stop offset="1" stop-color="#b0b0b8"/></linearGradient></defs>
<rect x="5" y="0.6" width="10.8" height="10.2" rx="1.6" fill="url(#tg4)" stroke="#c4c4cc" stroke-width=".5"/>
<rect x="4.6" y="10.3" width="11.4" height="0.9" fill="#6a6a6a"/>
<rect x="0.2" y="2.4" width="4.4" height="8" fill="#F5B400" stroke="#cf9000" stroke-width=".5"/>
<rect x="0.4" y="4" width="2" height="3.6" fill="#4f86c6"/>
<circle cx="2.7" cy="11.6" r="1.45" fill="#d8cfcf" stroke="#3a1c1c" stroke-width="1.1"/>
<circle cx="13.2" cy="11.6" r="1.45" fill="#d8cfcf" stroke="#3a1c1c" stroke-width="1.1"/>
</svg>
<div class="s" style="left:342.4px;top:425px;font-size:11.5px;line-height:16px;color:#000;transform:scaleX(0.9039);">Dump 5</div>
<svg class="a" style="left:403px;top:423px" width="17" height="16" viewBox="0 0 17 16">
<defs><radialGradient id="dg" cx=".5" cy=".62" r=".6"><stop offset="0" stop-color="#F8E6C4"/><stop offset=".45" stop-color="#E9B877"/><stop offset="1" stop-color="#B26A28"/></radialGradient></defs>
<ellipse cx="8.4" cy="14.6" rx="5.5" ry=".8" fill="#000" opacity=".12"/>
<circle cx="4" cy="3.7" r="2.8" fill="#B9702C"/><circle cx="12.9" cy="3.7" r="2.8" fill="#B9702C"/>
<circle cx="4.2" cy="4.1" r="1.5" fill="#E2A868"/><circle cx="12.7" cy="4.1" r="1.5" fill="#E2A868"/>
<ellipse cx="8.4" cy="8.7" rx="7.4" ry="5.9" fill="url(#dg)"/>
<ellipse cx="8.4" cy="11.6" rx="3.6" ry="2.4" fill="#FBF0DC"/>
<circle cx="5.6" cy="8.6" r="1" fill="#2a1a1a"/><circle cx="11.3" cy="8.6" r="1" fill="#2a1a1a"/>
<circle cx="5.2" cy="8.3" r=".45" fill="#fff"/><circle cx="11.7" cy="8.3" r=".45" fill="#fff"/>
<ellipse cx="8.4" cy="11.5" rx="1.5" ry="1.1" fill="#3a2228"/>
</svg>
<div class="s" style="left:423.1px;top:425px;font-size:11.5px;line-height:16px;color:#000;transform:scaleX(0.9651);">Watch 1</div>
<div class="s" style="left:487.6px;top:426px;font-size:10.5px;line-height:12px;color:#444;letter-spacing:-0.3px">[<span style="font-family:'Liberation Serif',serif;font-style:italic;font-weight:bold;color:#8B2A2A;font-size:11.5px;letter-spacing:0">x</span><span style="color:#777">=</span>]</div>
<div class="s" style="left:507.1px;top:425px;font-size:11.5px;line-height:16px;color:#000;transform:scaleX(0.8723);">Locals</div>
<svg class="a" style="left:560px;top:423px" width="19" height="16" viewBox="0 0 19 16">
<path d="M6 4.7 H11 M8.5 4.7 V11.5 H11" fill="none" stroke="#aaa" stroke-width="1"/>
<circle cx="3.6" cy="4.7" r="1.9" fill="#9DB4FF" stroke="#3050E0" stroke-width="1.1"/>
<circle cx="13.6" cy="4.7" r="2" fill="#fff" stroke="#999" stroke-width="1"/>
<circle cx="13.6" cy="11.5" r="2" fill="#fff" stroke="#999" stroke-width="1"/>
</svg>
<div class="s" style="left:580.2px;top:425px;font-size:11.5px;line-height:16px;color:#000;transform:scaleX(0.9821);">Struct</div>
<div style="left:0px;top:443px;width:1154px;height:1px;background:#828790;"></div>
<div style="left:1153px;top:443px;width:1px;height:172px;background:#828790;"></div>
<div style="left:0px;top:444px;width:1135px;height:13px;background:#C0C0C0;"></div>
<div style="left:0px;top:457px;width:1136px;height:1px;background:#808080;"></div>
<div style="left:55px;top:444px;width:1px;height:14px;background:#808080;"></div>
<div style="left:56px;top:444px;width:1px;height:14px;background:#909090;"></div>
<div style="left:392px;top:444px;width:1px;height:14px;background:#808080;"></div>
<div style="left:393px;top:444px;width:1px;height:14px;background:#909090;"></div>
<div style="left:512px;top:444px;width:1px;height:14px;background:#808080;"></div>
<div style="left:513px;top:444px;width:1px;height:14px;background:#909090;"></div>
<div style="left:1134px;top:444px;width:1px;height:14px;background:#808080;"></div>
<div style="left:1135px;top:444px;width:1px;height:14px;background:#999;"></div>
<div class="m" style="left:-3px;top:446px;color:#000;">Address</div>
<div class="m" style="left:61px;top:446px;color:#000;">Hex</div>
<div class="m" style="left:398px;top:446px;color:#000;">ASCII</div>
<div style="left:57px;top:459px;width:21px;height:11px;background:#C0C0C0;"></div>
<div style="left:398px;top:459px;width:7px;height:11px;background:#C0C0C0;"></div>
<div style="left:141px;top:458px;width:1px;height:157px;background:#808080;"></div>
<div style="left:225px;top:458px;width:1px;height:157px;background:#808080;"></div>
<div style="left:309px;top:458px;width:1px;height:157px;background:#808080;"></div>
<div style="left:56px;top:458px;width:1px;height:157px;background:#808080;"></div>
<div style="left:393px;top:458px;width:1px;height:157px;background:#808080;"></div>
<div style="left:513px;top:458px;width:1px;height:157px;background:#808080;"></div>
<div id="dump" style="left:0;top:0">
<div class="m" style="left:-3px;top:459px;color:#000;">001E0000</div>
<div class="m" style="left:61px;top:459px;color:#000;"><span style="color:#800080;">33 </span><span style="color:#000;">C9 </span><span style="color:#800080;">64 </span><span style="color:#000;">8B </span><span style="color:#800080;">49 30 </span><span style="color:#000;">8B </span><span style="color:#800080;">49 0C </span><span style="color:#000;">8B </span><span style="color:#800080;">49 </span><span style="color:#000;">1C 8B </span><span style="color:#800080;">59 </span><span style="color:#000;">08 8B</span></div>
<div class="m" style="left:398px;top:459px;color:#000;"><span style="color:#800080;">3</span><span style="color:#000;">É</span><span style="color:#800080;">d</span><span style="color:#000;">.</span><span style="color:#800080;">I0</span><span style="color:#000;">.</span><span style="color:#800080;">I.</span><span style="color:#000;">.</span><span style="color:#800080;">I</span><span style="color:#000;">..</span><span style="color:#800080;">Y</span><span style="color:#000;">..</span></div>
<div class="m" style="left:-3px;top:470px;color:#000;">001E0010</div>
<div class="m" style="left:61px;top:470px;color:#000;"><span style="color:#800080;">41 20 </span><span style="color:#000;">8B </span><span style="color:#800080;">09 </span><span style="color:#000;">80 </span><span style="color:#800080;">78 0C 33 75 </span><span style="color:#000;">F2 8B EB 03 </span><span style="color:#800080;">6D 3C </span><span style="color:#000;">8B</span></div>
<div class="m" style="left:398px;top:470px;color:#000;"><span style="color:#800080;">A </span><span style="color:#000;">.</span><span style="color:#800080;">.</span><span style="color:#000;">.</span><span style="color:#800080;">x.3u</span><span style="color:#000;">ò.ë.</span><span style="color:#800080;">m&lt;</span><span style="color:#000;">.</span></div>
<div class="m" style="left:-3px;top:481px;color:#000;">001E0020</div>
<div class="m" style="left:61px;top:481px;color:#000;"><span style="color:#800080;">6D 78 </span><span style="color:#000;">03 EB 8B </span><span style="color:#800080;">45 20 </span><span style="color:#000;">03 C3 </span><span style="color:#800080;">33 </span><span style="color:#000;">D2 8B </span><span style="color:#800080;">34 </span><span style="color:#000;">90 03 F3</span></div>
<div class="m" style="left:398px;top:481px;color:#000;"><span style="color:#800080;">mx</span><span style="color:#000;">.ë.</span><span style="color:#800080;">E </span><span style="color:#000;">.Ã</span><span style="color:#800080;">3</span><span style="color:#000;">Ò.</span><span style="color:#800080;">4</span><span style="color:#000;">..ó</span></div>
<div class="m" style="left:-3px;top:492px;color:#000;">001E0030</div>
<div class="m" style="left:61px;top:492px;color:#000;"><span style="color:#800080;">42 </span><span style="color:#000;">81 </span><span style="color:#800080;">3E 47 65 74 50 75 </span><span style="color:#000;">F2 81 </span><span style="color:#800080;">7E </span><span style="color:#000;">04 </span><span style="color:#800080;">72 6F 63 41</span></div>
<div class="m" style="left:398px;top:492px;color:#000;"><span style="color:#800080;">B</span><span style="color:#000;">.</span><span style="color:#800080;">&gt;GetPu</span><span style="color:#000;">ò.</span><span style="color:#800080;">~</span><span style="color:#000;">.</span><span style="color:#800080;">rocA</span></div>
<div class="m" style="left:-3px;top:503px;color:#000;">001E0040</div>
<div class="m" style="left:61px;top:503px;color:#000;"><span style="color:#800080;">75 </span><span style="color:#000;">E9 8B </span><span style="color:#800080;">75 24 </span><span style="color:#000;">03 F3 </span><span style="color:#800080;">66 </span><span style="color:#000;">8B 14 </span><span style="color:#800080;">56 </span><span style="color:#000;">8B </span><span style="color:#800080;">75 </span><span style="color:#000;">1C 03 F3</span></div>
<div class="m" style="left:398px;top:503px;color:#000;"><span style="color:#800080;">u</span><span style="color:#000;">é.</span><span style="color:#800080;">u$</span><span style="color:#000;">.ó</span><span style="color:#800080;">f</span><span style="color:#000;">..</span><span style="color:#800080;">V</span><span style="color:#000;">.</span><span style="color:#800080;">u</span><span style="color:#000;">..ó</span></div>
<div class="m" style="left:-3px;top:514px;color:#000;">001E0050</div>
<div class="m" style="left:61px;top:514px;color:#000;"><span style="color:#000;">8B </span><span style="color:#800080;">74 </span><span style="color:#000;">96 FC 03 F3 </span><span style="color:#800080;">33 </span><span style="color:#800000;">FF </span><span style="color:#800080;">57 68 61 72 79 41 68 4C</span></div>
<div class="m" style="left:398px;top:514px;color:#000;"><span style="color:#000;">.</span><span style="color:#800080;">t</span><span style="color:#000;">.ü.ó</span><span style="color:#800080;">3</span><span style="color:#800000;">ÿ</span><span style="color:#800080;">WharyAhL</span></div>
<div class="m" style="left:-3px;top:525px;color:#000;">001E0060</div>
<div class="m" style="left:61px;top:525px;color:#000;"><span style="color:#800080;">69 62 72 68 4C 6F 61 64 54 53 </span><span style="color:#800000;">FF </span><span style="color:#000;">D6 </span><span style="color:#800080;">33 </span><span style="color:#000;">C9 </span><span style="color:#800080;">57 66</span></div>
<div class="m" style="left:398px;top:525px;color:#000;"><span style="color:#800080;">ibrhLoadTS</span><span style="color:#800000;">ÿ</span><span style="color:#000;">Ö</span><span style="color:#800080;">3</span><span style="color:#000;">É</span><span style="color:#800080;">Wf</span></div>
<div class="m" style="left:-3px;top:536px;color:#000;">001E0070</div>
<div class="m" style="left:61px;top:536px;color:#000;"><span style="color:#000;">B9 </span><span style="color:#800080;">33 32 51 68 75 73 65 72 54 </span><span style="color:#800000;">FF </span><span style="color:#000;">D0 </span><span style="color:#800080;">57 68 6F 78</span></div>
<div class="m" style="left:398px;top:536px;color:#000;"><span style="color:#000;">¹</span><span style="color:#800080;">32QhuserT</span><span style="color:#800000;">ÿ</span><span style="color:#000;">Ð</span><span style="color:#800080;">Whox</span></div>
<div class="m" style="left:-3px;top:547px;color:#000;">001E0080</div>
<div class="m" style="left:61px;top:547px;color:#000;"><span style="color:#800080;">41 </span><span style="color:#000;">01 FE </span><span style="color:#800080;">4C 24 </span><span style="color:#000;">03 </span><span style="color:#800080;">68 61 67 65 42 68 4D 65 73 73</span></div>
<div class="m" style="left:398px;top:547px;color:#000;"><span style="color:#800080;">A</span><span style="color:#000;">.þ</span><span style="color:#800080;">L$</span><span style="color:#000;">.</span><span style="color:#800080;">hageBhMess</span></div>
<div class="m" style="left:-3px;top:558px;color:#000;">001E0090</div>
<div class="m" style="left:61px;top:558px;color:#000;"><span style="color:#800080;">54 50 </span><span style="color:#800000;">FF </span><span style="color:#000;">D6 </span><span style="color:#800080;">57 68 72 6C 64 21 68 6F 20 57 6F 68</span></div>
<div class="m" style="left:398px;top:558px;color:#000;"><span style="color:#800080;">TP</span><span style="color:#800000;">ÿ</span><span style="color:#000;">Ö</span><span style="color:#800080;">Whrld!ho Woh</span></div>
<div class="m" style="left:-3px;top:569px;color:#000;">001E00A0</div>
<div class="m" style="left:61px;top:569px;color:#000;"><span style="color:#800080;">48 65 6C 6C </span><span style="color:#000;">8B CC </span><span style="color:#800080;">57 57 51 57 </span><span style="color:#800000;">FF </span><span style="color:#000;">D0 </span><span style="color:#800080;">57 68 65 73</span></div>
<div class="m" style="left:398px;top:569px;color:#000;"><span style="color:#800080;">Hell</span><span style="color:#000;">.Ì</span><span style="color:#800080;">WWQW</span><span style="color:#800000;">ÿ</span><span style="color:#000;">Ð</span><span style="color:#800080;">Whes</span></div>
<div class="m" style="left:-3px;top:580px;color:#000;">001E00B0</div>
<div class="m" style="left:61px;top:580px;color:#000;"><span style="color:#800080;">73 </span><span style="color:#000;">01 FE </span><span style="color:#800080;">4C 24 </span><span style="color:#000;">03 </span><span style="color:#800080;">68 50 72 6F 63 68 45 78 69 74</span></div>
<div class="m" style="left:398px;top:580px;color:#000;"><span style="color:#800080;">s</span><span style="color:#000;">.þ</span><span style="color:#800080;">L$</span><span style="color:#000;">.</span><span style="color:#800080;">hProchExit</span></div>
<div class="m" style="left:-3px;top:591px;color:#000;">001E00C0</div>
<div class="m" style="left:61px;top:591px;color:#000;"><span style="color:#800080;">54 53 </span><span style="color:#800000;">FF </span><span style="color:#000;">D6 </span><span style="color:#800080;">57 </span><span style="color:#800000;">FF </span><span style="color:#000;">D0 </span><span style="color:#008000;">00 00 00 00 00 00 00 00 00</span></div>
<div class="m" style="left:398px;top:591px;color:#000;"><span style="color:#800080;">TS</span><span style="color:#800000;">ÿ</span><span style="color:#000;">Ö</span><span style="color:#800080;">W</span><span style="color:#800000;">ÿ</span><span style="color:#000;">Ð</span><span style="color:#008000;">.........</span></div>
<div class="m" style="left:-3px;top:602px;color:#000;">001E00D0</div>
<div class="m" style="left:61px;top:602px;color:#000;"><span style="color:#008000;">00 00 00 00 00 00 00 00 00 00 00 00 00 00 00 00</span></div>
<div class="m" style="left:398px;top:602px;color:#000;"><span style="color:#008000;">................</span></div>
<div class="m" style="left:-3px;top:613px;color:#000;">001E00E0</div>
<div class="m" style="left:61px;top:613px;color:#000;"><span style="color:#008000;">00 00 00 00 00 00 00 00 00 00 00 00 00 00 00 00</span></div>
<div class="m" style="left:398px;top:613px;color:#000;"><span style="color:#008000;">................</span></div>
</div>
<div style="left:143px;top:490px;width:21px;height:2px;background:#000080;"></div>
<div style="left:164px;top:490px;width:65px;height:1px;background:#808080;"></div>
<div style="left:164px;top:491px;width:65px;height:1px;background:#A8A6A2;"></div>
<div style="left:143px;top:501px;width:21px;height:2px;background:#FF0000;"></div>
<div style="left:164px;top:501px;width:65px;height:1px;background:#808080;"></div>
<div style="left:164px;top:502px;width:65px;height:1px;background:#A8A6A2;"></div>
<div style="left:1136px;top:444px;width:17px;height:171px;background:#F0F0F0;"></div>
<div style="left:1135px;top:458px;width:1px;height:157px;background:#A0A0A0;"></div>
<div style="left:1137px;top:461px;width:15px;height:154px;background:#CDCDCD;"></div>
<svg class="a" style="left:1138.5px;top:447px" width="12" height="12" viewBox="-6 -6 12 12"><path d="M-3.0 2.6 L0 -1.6 L3.0 2.6" fill="none" stroke="#505050" stroke-width="2"/></svg>
<div style="left:1155px;top:419px;width:1px;height:196px;background:#828790;"></div>
<div style="left:1156px;top:419px;width:595px;height:1px;background:#828790;"></div>
<div style="left:1155px;top:418px;width:596px;height:1px;background:#F0F0F0;"></div>
<div style="left:1220px;top:420px;width:531px;height:11px;background:#C0C0C0;"></div>
<div style="left:1156px;top:420px;width:63px;height:11px;background:#000;"></div>
<div style="left:1219px;top:420px;width:1px;height:195px;background:#808080;"></div>
<div style="left:1285px;top:420px;width:1px;height:195px;background:#808080;"></div>
<div id="stack" style="left:0;top:0">
<div class="m" style="left:1160px;top:420px;color:#FFF;">0062D37C</div>
<div class="m" style="left:1224px;top:420px;color:#000;">00404088</div>
<div class="m" style="left:1290px;top:420px;color:#000;">main."RtlMoveMemory Executed:\nlpData=%p\npayload=%p\nsize=%zu\n"</div>
<div class="m" style="left:1160px;top:431px;color:#808080;">0062D380</div>
<div class="m" style="left:1224px;top:431px;color:#000;">001E0000</div>
<div class="m" style="left:1160px;top:442px;color:#808080;">0062D384</div>
<div class="m" style="left:1224px;top:442px;color:#000;">00403020</div>
<div class="m" style="left:1290px;top:442px;color:#000;">main.00403020</div>
<div class="m" style="left:1160px;top:453px;color:#808080;">0062D388</div>
<div class="m" style="left:1224px;top:453px;color:#000;">000000C7</div>
<div class="m" style="left:1160px;top:464px;color:#808080;">0062D38C</div>
<div class="m" style="left:1224px;top:464px;color:#000;">00000000</div>
<div class="m" style="left:1160px;top:475px;color:#808080;">0062D390</div>
<div class="m" style="left:1224px;top:475px;color:#000;">00000000</div>
<div class="m" style="left:1160px;top:486px;color:#808080;">0062D394</div>
<div class="m" style="left:1224px;top:486px;color:#000;">00000000</div>
<div class="m" style="left:1160px;top:497px;color:#808080;">0062D398</div>
<div class="m" style="left:1224px;top:497px;color:#000;">00000000</div>
<div class="m" style="left:1160px;top:508px;color:#808080;">0062D39C</div>
<div class="m" style="left:1224px;top:508px;color:#000;">00000000</div>
<div class="m" style="left:1160px;top:519px;color:#808080;">0062D3A0</div>
<div class="m" style="left:1224px;top:519px;color:#000;">00000000</div>
<div class="m" style="left:1160px;top:530px;color:#808080;">0062D3A4</div>
<div class="m" style="left:1224px;top:530px;color:#000;">00000027</div>
<div class="m" style="left:1160px;top:541px;color:#808080;">0062D3A8</div>
<div class="m" style="left:1224px;top:541px;color:#000;">00000000</div>
<div class="m" style="left:1160px;top:552px;color:#808080;">0062D3AC</div>
<div class="m" style="left:1224px;top:552px;color:#000;">00000000</div>
<div class="m" style="left:1160px;top:563px;color:#808080;">0062D3B0</div>
<div class="m" style="left:1224px;top:563px;color:#000;">00000000</div>
<div class="m" style="left:1160px;top:574px;color:#808080;">0062D3B4</div>
<div class="m" style="left:1224px;top:574px;color:#000;">00000027</div>
<div class="m" style="left:1160px;top:585px;color:#808080;">0062D3B8</div>
<div class="m" style="left:1224px;top:585px;color:#000;">00000000</div>
<div class="m" style="left:1160px;top:596px;color:#808080;">0062D3BC</div>
<div class="m" style="left:1224px;top:596px;color:#000;">00000000</div>
<div class="m" style="left:1160px;top:607px;color:#808080;">0062D3C0</div>
<div class="m" style="left:1224px;top:607px;color:#000;">00000000</div>
</div>
<div id="dlg" style="left:917px;top:334px;width:119px;height:128px;">
<div style="left:0;top:0;width:117px;height:84px;background:#fff"></div>
<div style="left:0;top:84px;width:117px;height:42px;background:#F0F0F0"></div>
<svg class="a" style="left:97px;top:7px" width="11" height="11" viewBox="0 0 11 11"><path d="M0.3 0.3 L10 10 M10 0.3 L0.3 10" stroke="#444" stroke-width="1" fill="none"/></svg>
<div id="ok" style="left:27px;top:93px;width:75px;height:23px;"></div>
</div>
<div class="s" style="left:920.5px;top:339px;font-size:13px;line-height:16px;color:#999;transform:scaleX(0.8584);">Error</div>
<div class="s" style="left:929.3px;top:382px;font-size:11.5px;line-height:16px;color:#000;transform:scaleX(1.0301);">Hello World!</div>
<div class="s" style="left:975.3px;top:431px;font-size:11.5px;line-height:16px;color:#000;transform:scaleX(0.9269);">OK</div>
</body></html>
